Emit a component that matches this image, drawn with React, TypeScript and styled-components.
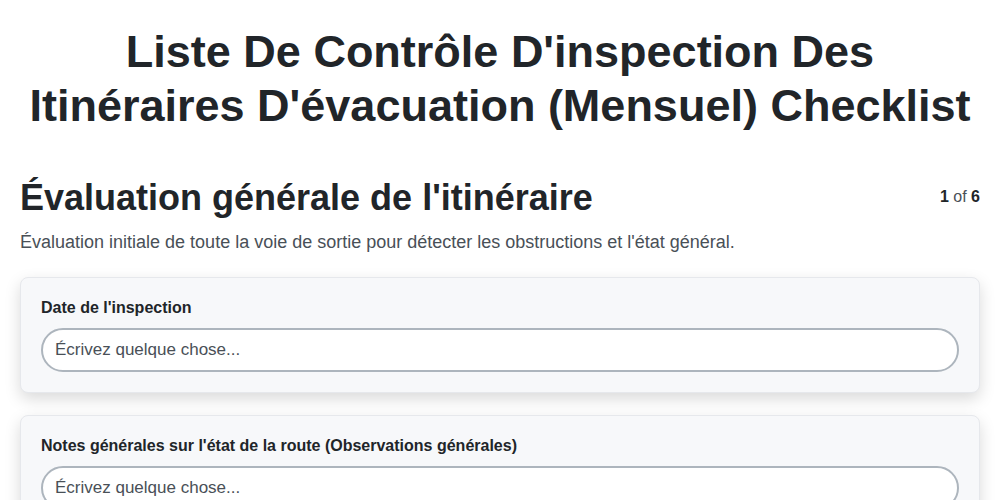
import React from "react";
import styled, { createGlobalStyle } from "styled-components";

const GlobalStyle = createGlobalStyle`
  body {
    margin: 0;
    background: #ffffff;
    font-family: "Liberation Sans", Arial, sans-serif;
    color: #212529;
  }
  * {
    box-sizing: border-box;
  }
`;

const Page = styled.div`
  max-width: 1000px;
  margin: 0 auto;
  padding: 25px 20px 20px;
`;

const Title = styled.h1`
  margin: 0 0 43px;
  font-size: 45px;
  line-height: 54px;
  font-weight: 700;
  text-align: center;
  color: #212529;
`;

const SectionHeader = styled.div`
  display: flex;
  justify-content: space-between;
  align-items: center;
`;

const SectionTitle = styled.h2`
  margin: 0;
  font-size: 36px;
  line-height: 44px;
  font-weight: 700;
  color: #212529;
`;

const Counter = styled.div`
  font-size: 16px;
  color: #495057;
  align-self: flex-start;
  margin-top: 12px;

  b {
    color: #212529;
  }
`;

const Description = styled.p`
  margin: 11px 0 24px;
  font-size: 18px;
  line-height: 22px;
  color: #495057;
`;

const Card = styled.div`
  background: #f7f8fa;
  border: 1px solid #e6e8ec;
  border-radius: 8px;
  box-shadow: 0 6px 16px rgba(0, 0, 0, 0.15);
  padding: 20px 20px 20px;
  margin-bottom: 22px;
`;

const Label = styled.label`
  display: block;
  font-size: 16px;
  line-height: 20px;
  font-weight: 700;
  color: #212529;
  margin-bottom: 10px;
`;

const Input = styled.input`
  display: block;
  width: 100%;
  height: 44px;
  padding: 0 12px;
  border: 2px solid #adb5bd;
  border-radius: 22px;
  background: #ffffff;
  font-family: "Liberation Sans", Arial, sans-serif;
  font-size: 17px;
  color: #212529;
  outline: none;

  &::placeholder {
    color: #495057;
  }
`;

const fields = [
  "Date de l'inspection",
  "Notes générales sur l'état de la route (Observations générales)",
];

export default function App() {
  return (
    <>
      <GlobalStyle />
      <Page>
        <Title>
          Liste De Contrôle D'inspection Des Itinéraires D'évacuation (Mensuel) Checklist
        </Title>
        <SectionHeader>
          <SectionTitle>Évaluation générale de l'itinéraire</SectionTitle>
          <Counter>
            <b>1</b> of <b>6</b>
          </Counter>
        </SectionHeader>
        <Description>
          Évaluation initiale de toute la voie de sortie pour détecter les obstructions et l'état général.
        </Description>
        {fields.map((f) => (
          <Card key={f}>
            <Label>{f}</Label>
            <Input placeholder="Écrivez quelque chose..." />
          </Card>
        ))}
      </Page>
    </>
  );
}
